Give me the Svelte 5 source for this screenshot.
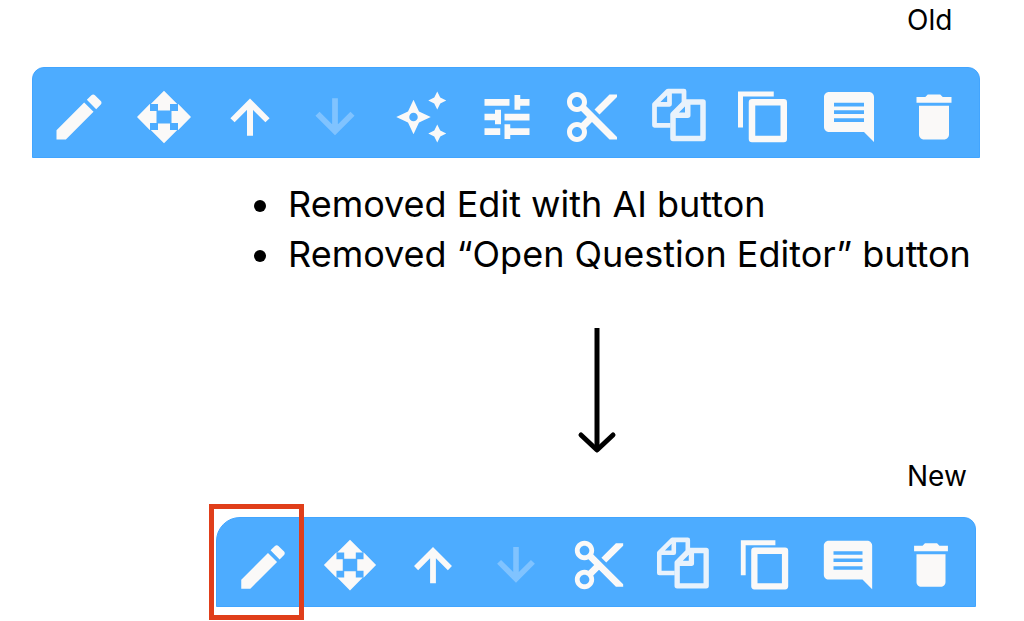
<script lang="ts">
    type Tool = {
        icon: string;
        label: string;
        disabled?: boolean;
        highlighted?: boolean;
    };

    const oldTools: Tool[] = [
        { icon: "edit", label: "Edit" },
        { icon: "move", label: "Move" },
        { icon: "up", label: "Move up" },
        { icon: "down", label: "Move down", disabled: true },
        { icon: "ai", label: "Edit with AI" },
        { icon: "tune", label: "Open Question Editor" },
        { icon: "cut", label: "Cut" },
        { icon: "pages", label: "Copy" },
        { icon: "duplicate", label: "Duplicate" },
        { icon: "comment", label: "Comment" },
        { icon: "trash", label: "Delete" }
    ];

    const newTools: Tool[] = oldTools
        .filter((tool) => tool.icon !== "ai" && tool.icon !== "tune")
        .map((tool) => ({ ...tool, highlighted: tool.icon === "edit" }));
</script>

{#snippet glyph(icon: string)}
    <svg viewBox="0 0 24 24" aria-hidden="true">
        {#if icon === "edit"}
            <path d="M3 17.25V21h3.75L17.81 9.94l-3.75-3.75L3 17.25zM20.71 7.04c.39-.39.39-1.02 0-1.41l-2.34-2.34c-.39-.39-1.02-.39-1.41 0l-1.83 1.83 3.75 3.75 1.83-1.83z" />
        {:else if icon === "move"}
            <path d="M12 1.5l5.3 5.3h-2.9v2.6H9.6V6.8H6.7zM12 22.5l5.3-5.3h-2.9v-2.6H9.6v2.6H6.7zM1.2 12l5.2-5.3v2.9H9v4.8H6.4v2.9zM22.8 12l-5.2-5.3v2.9H15v4.8h2.6v2.9z" />
        {:else if icon === "up"}
            <path class="line" stroke-width="2.4" d="M5 13.3l7-7 7 7M12 6.3v13.2" />
        {:else if icon === "down"}
            <path class="line" stroke-width="2.3" d="M5 10.7l7 7 7-7M12 17.7V4.5" />
        {:else if icon === "ai"}
            <path fill-rule="evenodd" d="M9 5.1l2.2 4.7 4.7 2.2-4.7 2.2L9 18.9l-2.2-4.7L2.1 12l4.7-2.2zM9 10.3a1.7 1.7 0 1 0 0 3.4 1.7 1.7 0 0 0 0-3.4z" />
            <path d="M18.5 1.8l1.2 2.4 2.4 1.2-2.4 1.2-1.2 2.4-1.2-2.4-2.4-1.2 2.4-1.2zM18.5 15l1.2 2.4 2.4 1.2-2.4 1.2-1.2 2.4-1.2-2.4-2.4-1.2 2.4-1.2z" />
        {:else if icon === "tune"}
            <path d="M3 4.8h10v2.7H3zM15 3.2h2.3v1.6H21v2.7h-3.7v1.6H15zM3 10.7h4.2V9.1h2.4v5.8H7.2v-1.6H3zM11 10.7h10v2.7H11zM3 16.5h6.3v2.7H3zM11 14.9h2.3v1.6H21v2.7h-7.7v1.6H11z" />
        {:else if icon === "cut"}
            <path d="M9.64 7.64c.23-.5.36-1.05.36-1.64 0-2.21-1.79-4-4-4S2 3.79 2 6s1.79 4 4 4c.59 0 1.14-.13 1.64-.36L10 12l-2.36 2.36C7.14 14.13 6.59 14 6 14c-2.21 0-4 1.79-4 4s1.79 4 4 4 4-1.79 4-4c0-.59-.13-1.14-.36-1.64L12 14l7 7h3v-1L9.64 7.64zM6 8c-1.1 0-2-.89-2-2s.9-2 2-2 2 .89 2 2-.9 2-2 2zm0 12c-1.1 0-2-.89-2-2s.9-2 2-2 2 .89 2 2-.9 2-2 2zM19 3l-6 6 2 2 7-7V3z" />
        {:else if icon === "pages"}
            <g class="line soft" stroke-linejoin="round">
                <path stroke-width="1.9" d="M14.4 6V1.6H8L2.6 7v8.3H9M8.6 1.8v5.1H2.8" />
                <path stroke-width="2.2" d="M15 6h7v14.6H10V11zM15.9 6.4v4.9H10.2" />
            </g>
        {:else if icon === "duplicate"}
            <path class="line" stroke-width="2" d="M3 16.2V2.8h13.3" />
            <rect class="line" stroke-width="2.6" stroke-linejoin="round" x="7.6" y="6.1" width="12.7" height="14.7" />
        {:else if icon === "comment"}
            <path d="M22 4c0-1.1-.9-2-2-2H4c-1.1 0-2 .9-2 2v12c0 1.1.9 2 2 2h14l4 4V4zM18 14H6v-1.5h12zM18 10.8H6V9.3h12zM18 7.8H6V6.3h12z" />
        {:else if icon === "trash"}
            <path d="M6 19c0 1.1.9 2 2 2h8c1.1 0 2-.9 2-2V7.5H6V19zM19 4h-3.5l-1-1h-5l-1 1H5v2.3h14V4z" />
        {/if}
    </svg>
{/snippet}

{#snippet toolbar(tools: Tool[], name: string)}
    <div class="toolbar {name}" role="toolbar" aria-label="{name} toolbar">
        {#each tools as tool (tool.icon)}
            <button
                type="button"
                class:highlighted={tool.highlighted}
                disabled={tool.disabled}
                aria-label={tool.label}
            >
                {@render glyph(tool.icon)}
            </button>
        {/each}
    </div>
{/snippet}

<main>
    <h2>Old</h2>
    {@render toolbar(oldTools, "old")}

    <ul>
        <li>Removed Edit with AI button</li>
        <li>Removed “Open Question Editor” button</li>
    </ul>

    <div class="arrow">
        <svg viewBox="0 0 40 126" aria-hidden="true">
            <path d="M20 0v121" />
            <path stroke-linecap="round" stroke-linejoin="round" d="M4 107l16 15 16-15" />
        </svg>
    </div>

    <h2>New</h2>
    {@render toolbar(newTools, "new")}
</main>

<style>
    :global(body) {
        margin: 0;
        background: #fff;
    }

    main {
        display: flex;
        flex-direction: column;
        padding-bottom: 14px;
        font-family: Inter, "Liberation Sans", sans-serif;
        color: #000;
    }

    h2 {
        align-self: flex-end;
        width: 117px;
        margin: 0;
        font-size: 28px;
        font-weight: 400;
        line-height: 40px;
    }

    .toolbar {
        display: flex;
        box-sizing: border-box;
        border: 1px solid #42a5ff;
        background: #4dacff;
    }

    .toolbar.old {
        height: 91px;
        margin: 27px 44px 0 32px;
        padding: 8px 2px 0 3px;
        border-radius: 12px 12px 0 0;
    }

    .toolbar.new {
        height: 90px;
        margin: 21px 48px 0 216px;
        padding: 6px 3px 0 0;
        border-radius: 24px 12px 0 0;
    }

    button {
        display: flex;
        flex: 1;
        align-items: center;
        justify-content: center;
        min-width: 0;
        padding: 0;
        border: 0;
        background: none;
        color: #faf9f8;
        cursor: pointer;
    }

    button:disabled {
        color: #80c3ff;
        cursor: default;
    }

    button svg {
        width: 60px;
        height: 60px;
        fill: currentColor;
    }

    .new button svg {
        width: 58px;
        height: 58px;
    }

    .line {
        fill: none;
        stroke: currentColor;
    }

    .soft {
        stroke: #e8f2fc;
    }

    /* marks the button that stays first in the shorter toolbar */
    .highlighted {
        position: relative;
        flex: 0 0 91px;
        padding-top: 4px;
    }

    .highlighted::after {
        content: "";
        position: absolute;
        inset: -20px 4px -14px -8px;
        border: 5px solid #e03e1a;
    }

    ul {
        margin: 21px 0 0;
        padding-left: 284px;
        font-size: 36px;
        line-height: 50px;
    }

    li {
        padding-left: 4px;
    }

    .arrow {
        display: flex;
        justify-content: center;
        margin: 49px 0 2px;
        padding-left: 170px;
    }

    .arrow svg {
        width: 40px;
        height: 126px;
        fill: none;
        stroke: #000;
        stroke-width: 5;
    }
</style>
